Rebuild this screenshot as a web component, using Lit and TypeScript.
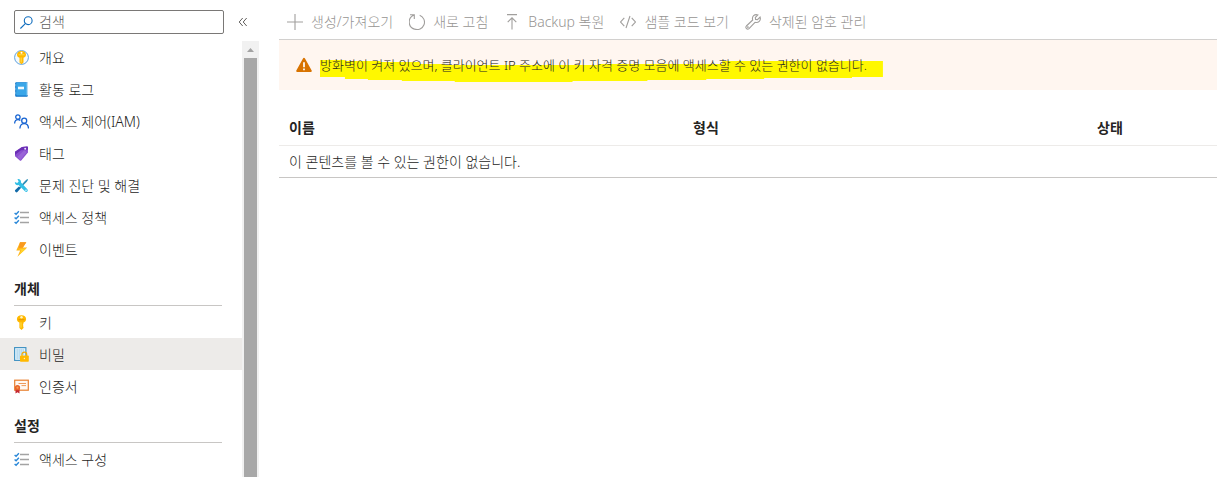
import { LitElement, html, css, svg, TemplateResult } from "lit";
import { customElement } from "lit/decorators.js";
import { classMap } from "lit/directives/class-map.js";

const checklist = svg`
  <g fill="none">
    <path d="M.6 2.900l1.500 1.400L4.900 1.300M.6 7.400l1.500 1.400 2.800-3M.6 11.900l1.500 1.400 2.800-3" stroke="#2b88d8" stroke-width="1.400"/>
    <path d="M6 2.500h9M6 7.500h9M6 12.500h9" stroke="#a3a3a3" stroke-width="1.400"/>
  </g>`;

const keyShape = svg`
  <path fill="#ffb900" d="M7.500.2C4.700.2 2.900 1.700 2.900 3.900c0 1.800 1 3 2.500 3.500v5.500l2.100 2 2-2v-1.200l-.7-.8.7-.8-.7-.9.7-.8V7.400c1.600-.5 2.600-1.700 2.600-3.500C12.100 1.700 10.300.2 7.500.2z"/>
  <circle cx="7.500" cy="2.200" r="1.200" fill="#fff3c4"/>
  <path d="M4.500 4.700h6" stroke="#e08a00" stroke-width=".8"/>
  <path d="M7 7.300v5.500" stroke="#ffdc3c" stroke-width="1.200"/>`;

const icons: Record<string, TemplateResult> = {
  overview: svg`
    <circle cx="7.5" cy="7.5" r="6.9" fill="#f3faff" stroke="#5ea0dc" stroke-width="1"/>
    <path fill="#ffb900" d="M7.500.9C4.800.9 3 2.400 3 4.500c0 1.700 1 2.900 2.500 3.300v4.600l2 1.900 2-1.900v-4.600C11 7.400 12 6.200 12 4.500 12 2.400 10.200.9 7.500.9z"/>
    <path fill="#ffd84a" d="M4.500 4.200h6v1h-6zM6.600 7.600h1.200v5H6.600z"/>
    <circle cx="7.500" cy="2.700" r="1" fill="#fff"/>`,
  log: svg`
    <rect x="1.200" y=".2" width="12.600" height="14.600" rx="1" fill="#1073c6"/>
    <path d="M12 .7h1.800v12.600H12z" fill="#d6eefb"/>
    <rect x="2.200" y=".5" width="10.600" height="12.900" rx=".4" fill="#3aa6e8"/>
    <rect x="4" y="4.700" width="6" height="2.600" fill="#f1faff"/>
    <path d="M1.300 3h.9M1.300 7h.9M1.300 11h.9" stroke="#9bdcf9"/>`,
  iam: svg`
    <g fill="none" stroke="#1764d2" stroke-width="1.300">
      <circle cx="3.900" cy="3" r="2.200"/><path d="M.6 9.600C.7 6.900 1.900 5.600 4 5.600c1 0 1.800.3 2.300.9"/>
      <circle cx="10.200" cy="6.700" r="2.500"/><path d="M5.900 14.600c.1-3.300 1.700-5 4.300-5s4.200 1.700 4.300 5"/>
    </g>`,
  tag: svg`
    <path fill="#8a4fcf" d="M8 .9L12.800.5c.7 0 1.200.4 1.200 1l-.1 4.900-6.700 8c-.4.4-1 .4-1.400.1L1 10.300V5.800z"/>
    <path fill="#6b2fb5" d="M8 .9L12.800.5c.7 0 1.200.4 1.200 1l-.1 2.200L7 4.200 1 9V5.800z"/>
    <path fill="#a77be0" d="M3.300 10.800l6.900-6.600 2.600 2.100-6.500 7.600z" opacity=".5"/>
    <circle cx="11.200" cy="2.800" r="1" fill="#efe2ff"/>`,
  tools: svg`
    <path d="M13.300.9l.8.8-1.300 2-7.500 7.600-1.100-1L11.500 2.500z" fill="#2c8fb8"/>
    <path d="M4.900 8.600l1.800 1.700-3.300 3.800c-1.200 1-3.100-.8-2.200-2z" fill="#126aa8"/>
    <path d="M.9 3.900L3.200 5l1.500-1.500L3.500 1.200c2-.5 3.900 1.100 3.500 3.200l6.400 6.900c1.300 1.500-.7 3.600-2.200 2.200L4.500 7.100C2.400 7.600.5 5.900.9 3.900z" fill="#32bfe6"/>
    <circle cx="12" cy="12.300" r=".7" fill="#fff"/>`,
  checklist,
  event: svg`
    <path fill="#ffb51b" d="M6 .3h6.300L8.900 5.600h4.300L3.400 14.800 6.200 8.600H2.300z"/>
    <path fill="#f9991f" d="M6 .3h6.300L8.900 5.600 4.700 6z"/>
    <path fill="#ffd42b" d="M4.300 7.100l8-.7-7 6.300 2.100-4.800z"/>`,
  key: keyShape,
  secret: svg`
    <rect x=".6" y=".6" width="11.300" height="12.800" fill="#e4f4fd" stroke="#3c8fc0" stroke-width="1.100"/>
    <path d="M2.500 3h8M2.500 5h8M2.500 7h8M2.500 9h4M2.500 11h4" stroke="#77b7dc" stroke-dasharray="1.300 .7" fill="none"/>
    <path d="M8 9V7.300c0-3 4.700-3 4.700 0V9" fill="none" stroke="#f2a900" stroke-width="1.200"/>
    <rect x="6" y="8.500" width="8.800" height="6.300" rx=".7" fill="#ffb900"/>
    <circle cx="10.400" cy="11.500" r=".7" fill="#fff0c0"/>`,
  cert: svg`
    <rect x=".7" y="1.200" width="13.600" height="10" fill="#fff8f1" stroke="#e87f2e" stroke-width="1.200"/>
    <path d="M4.500 4.500h7.500M7.500 6.600h4.500" stroke="#ef9b5a"/>
    <path d="M1.500 9.500h4v5l-2-1.200-2 1.200z" fill="#c4262e"/>
    <circle cx="3.500" cy="8.700" r="2.600" fill="#e8622a"/><circle cx="3.500" cy="8.700" r="1.100" fill="#f7a34f"/>`,
};

const commandIcons: Record<string, TemplateResult> = {
  add: svg`<path d="M8 0v16M0 8h16"/>`,
  refresh: svg`<path d="M1 .7h4.300V5M5.300 1A7.400 7.400 0 0 0 5.400 15.100a7.400 7.400 0 0 0 5.300-13.900"/>`,
  restore: svg`<path d="M3 .6h10M8 15.500V4M3.700 8.200L8 3.900l4.300 4.300"/>`,
  code: svg`<path d="M4.300 3.800L.6 8l3.700 4.200M11.700 3.800L15.400 8l-3.700 4.200M10 2L6 14"/>`,
  wrench: svg`<path d="M12.900.9L10.300 3.500l.3 1.900 1.900.3 2.600-2.600c1.100 3.300-1.700 6.300-5.100 5.200L4 14.600C2.300 16.200-.2 13.800 1.400 12L7.700 6C6.600 2.600 9.500-.3 12.900.9z"/><circle cx="2.900" cy="13.100" r=".4"/>`,
};

type Item = { label: string; icon: string; selected?: boolean };
type Group = { title?: string; items: Item[] };

const groups: Group[] = [
  {
    items: [
      { label: "개요", icon: "overview" },
      { label: "활동 로그", icon: "log" },
      { label: "액세스 제어(IAM)", icon: "iam" },
      { label: "태그", icon: "tag" },
      { label: "문제 진단 및 해결", icon: "tools" },
      { label: "액세스 정책", icon: "checklist" },
      { label: "이벤트", icon: "event" },
    ],
  },
  {
    title: "개체",
    items: [
      { label: "키", icon: "key" },
      { label: "비밀", icon: "secret", selected: true },
      { label: "인증서", icon: "cert" },
    ],
  },
  { title: "설정", items: [{ label: "액세스 구성", icon: "checklist" }] },
];

const commands = [
  { label: "생성/가져오기", icon: "add" },
  { label: "새로 고침", icon: "refresh" },
  { label: "Backup 복원", icon: "restore" },
  { label: "샘플 코드 보기", icon: "code" },
  { label: "삭제된 암호 관리", icon: "wrench" },
];

@customElement("side-menu")
class SideMenu extends LitElement {
  static styles = css`
    :host { display: flex; flex-direction: column; min-height: 0; }
    * { box-sizing: border-box; }
    .top { display: flex; align-items: center; gap: 14px; padding: 10px 10px 7px 14px; }
    .search {
      display: flex; align-items: center; gap: 6px; width: 210px; height: 24px;
      padding: 0 5px; border: 1px solid #7a7876; border-radius: 2px;
    }
    .search svg { flex: none; width: 13px; height: 13px; }
    .search input {
      flex: 1; min-width: 0; border: 0; padding: 0; outline: 0; background: none;
      font: inherit; line-height: 20px; color: #323130;
    }
    .search input::placeholder { color: #605e5c; opacity: 1; }
    .collapse { display: flex; padding: 0; border: 0; background: none; }
    .collapse svg { width: 10px; height: 10px; }
    .body { flex: 1; min-height: 0; display: flex; }
    nav { flex: 1; min-width: 0; overflow: hidden; }
    ul { list-style: none; margin: 0; padding: 0; }
    .title {
      height: 41px; margin: 0 20px 0 14px; padding-top: 14px; border-bottom: 1px solid #c8c6c4;
      font-size: 14px; line-height: 20px; font-weight: 600;
    }
    .item {
      display: flex; align-items: center; gap: 10px; height: 32px; padding: 1px 0 0 14px;
      color: #252423; text-decoration: none; white-space: nowrap;
    }
    .item svg { flex: none; width: 15px; height: 15px; }
    .selected { background: #edebe9; }
    .track {
      flex: none; width: 17px; display: flex; flex-direction: column; align-items: center;
      background: #f1f1f1;
    }
    .track svg { flex: none; width: 17px; height: 17px; }
    .thumb { flex: 1; width: 13px; background: #a8a8a8; }
  `;

  render() {
    return html`
      <div class="top">
        <label class="search">
          <svg viewBox="0 0 13 13" fill="none" stroke="#0f6cbd" stroke-width="1.100" aria-hidden="true">
            <circle cx="8.200" cy="4.700" r="3.900"/><path d="M5.300 7.600L.4 12.500"/>
          </svg>
          <input type="text" placeholder="검색" aria-label="검색" />
        </label>
        <button class="collapse" aria-label="메뉴 축소">
          <svg viewBox="0 0 10 10" fill="none" stroke="#605e5c"><path d="M4.700 1L1.200 5l3.500 4M8.700 1L5.200 5l3.500 4"/></svg>
        </button>
      </div>
      <div class="body">
        <nav>
          ${groups.map(
            (g) => html`
              ${g.title ? html`<h2 class="title">${g.title}</h2>` : null}
              <ul>
                ${g.items.map(
                  (i) => html`<li>
                    <a href="#" class=${classMap({ item: true, selected: !!i.selected })}>
                      <svg viewBox="0 0 15 15" aria-hidden="true">${icons[i.icon]}</svg>${i.label}
                    </a>
                  </li>`
                )}
              </ul>
            `
          )}
        </nav>
        <div class="track" aria-hidden="true">
          <svg viewBox="0 0 17 17"><path d="M5 11l3.500-4 3.500 4z" fill="#a3a3a3"/></svg>
          <div class="thumb"></div>
        </div>
      </div>
    `;
  }
}

@customElement("app-root")
class AppRoot extends LitElement {
  static styles = css`
    :host {
      display: grid; grid-template-columns: 259px minmax(0, 1fr); gap: 20px;
      height: 100vh; overflow: hidden; background: #fff; color: #252423;
      font: 300 14px/20px "Noto Sans", "Noto Sans CJK KR", sans-serif;
    }
    * { box-sizing: border-box; }
    .commands {
      display: flex; align-items: center; gap: 16px; height: 40px; padding: 4px 8px 0;
      border-bottom: 1px solid #d2d0ce;
    }
    .command {
      display: flex; align-items: center; gap: 8px; padding: 0; border: 0; background: none;
      font: inherit; color: #979593; white-space: nowrap;
    }
    .command svg { flex: none; width: 16px; height: 16px; fill: none; stroke: #a19f9d; stroke-width: 1.1px; }
    .banner {
      display: flex; align-items: center; gap: 8px; height: 50px; padding: 0 17px;
      background: #fff6f0; font-size: 13px; white-space: nowrap;
    }
    .banner > svg { flex: none; width: 16px; height: 16px; }
    .marked { position: relative; padding-right: 16px; }
    .marker { position: absolute; inset: 0; width: 100%; height: 100%; overflow: visible; }
    .message { position: relative; }
    table { width: 100%; margin-top: 20px; border-collapse: separate; border-spacing: 0; table-layout: fixed; }
    .wide { width: 404px; }
    th, td { padding: 0 10px; text-align: left; white-space: nowrap; }
    th { height: 36px; border-bottom: 1px solid #edebe9; font-weight: 600; }
    td { height: 32px; border-bottom: 1px solid #c8c6c4; }
  `;

  render() {
    return html`
      <side-menu></side-menu>
      <main>
        <div class="commands" role="toolbar">
          ${commands.map(
            (c) => html`<button class="command" disabled>
              <svg viewBox="0 0 16 16" aria-hidden="true">${commandIcons[c.icon]}</svg>${c.label}
            </button>`
          )}
        </div>
        <div class="banner" role="alert">
          <svg viewBox="0 0 16 16" aria-hidden="true">
            <path d="M8 1.800L14.800 14H1.200z" fill="#d87300" stroke="#d87300" stroke-width="2" stroke-linejoin="round"/>
            <path d="M8 5.200v5M8 11.500v1.700" stroke="#fff" stroke-width="1.700"/>
          </svg>
          <span class="marked">
            <svg class="marker" viewBox="0 0 564 20" preserveAspectRatio="none" aria-hidden="true">
              <path fill="#fff800" d="M0 5h25v1h35v1h40v2h25v1h155v-1h123V6h161v16h-31v1h-88v1h-58v1h-59v1h-75v1H135v-1H82v-1H48v-1H25v-2H0z"/>
            </svg>
            <span class="message">방화벽이 켜져 있으며, 클라이언트 IP 주소에 이 키 자격 증명 모음에 액세스할 수 있는 권한이 없습니다.</span>
          </span>
        </div>
        <table>
          <colgroup><col class="wide" /><col class="wide" /><col /></colgroup>
          <thead>
            <tr><th scope="col">이름</th><th scope="col">형식</th><th scope="col">상태</th></tr>
          </thead>
          <tbody>
            <tr><td colspan="3">이 콘텐츠를 볼 수 있는 권한이 없습니다.</td></tr>
          </tbody>
        </table>
      </main>
    `;
  }
}
